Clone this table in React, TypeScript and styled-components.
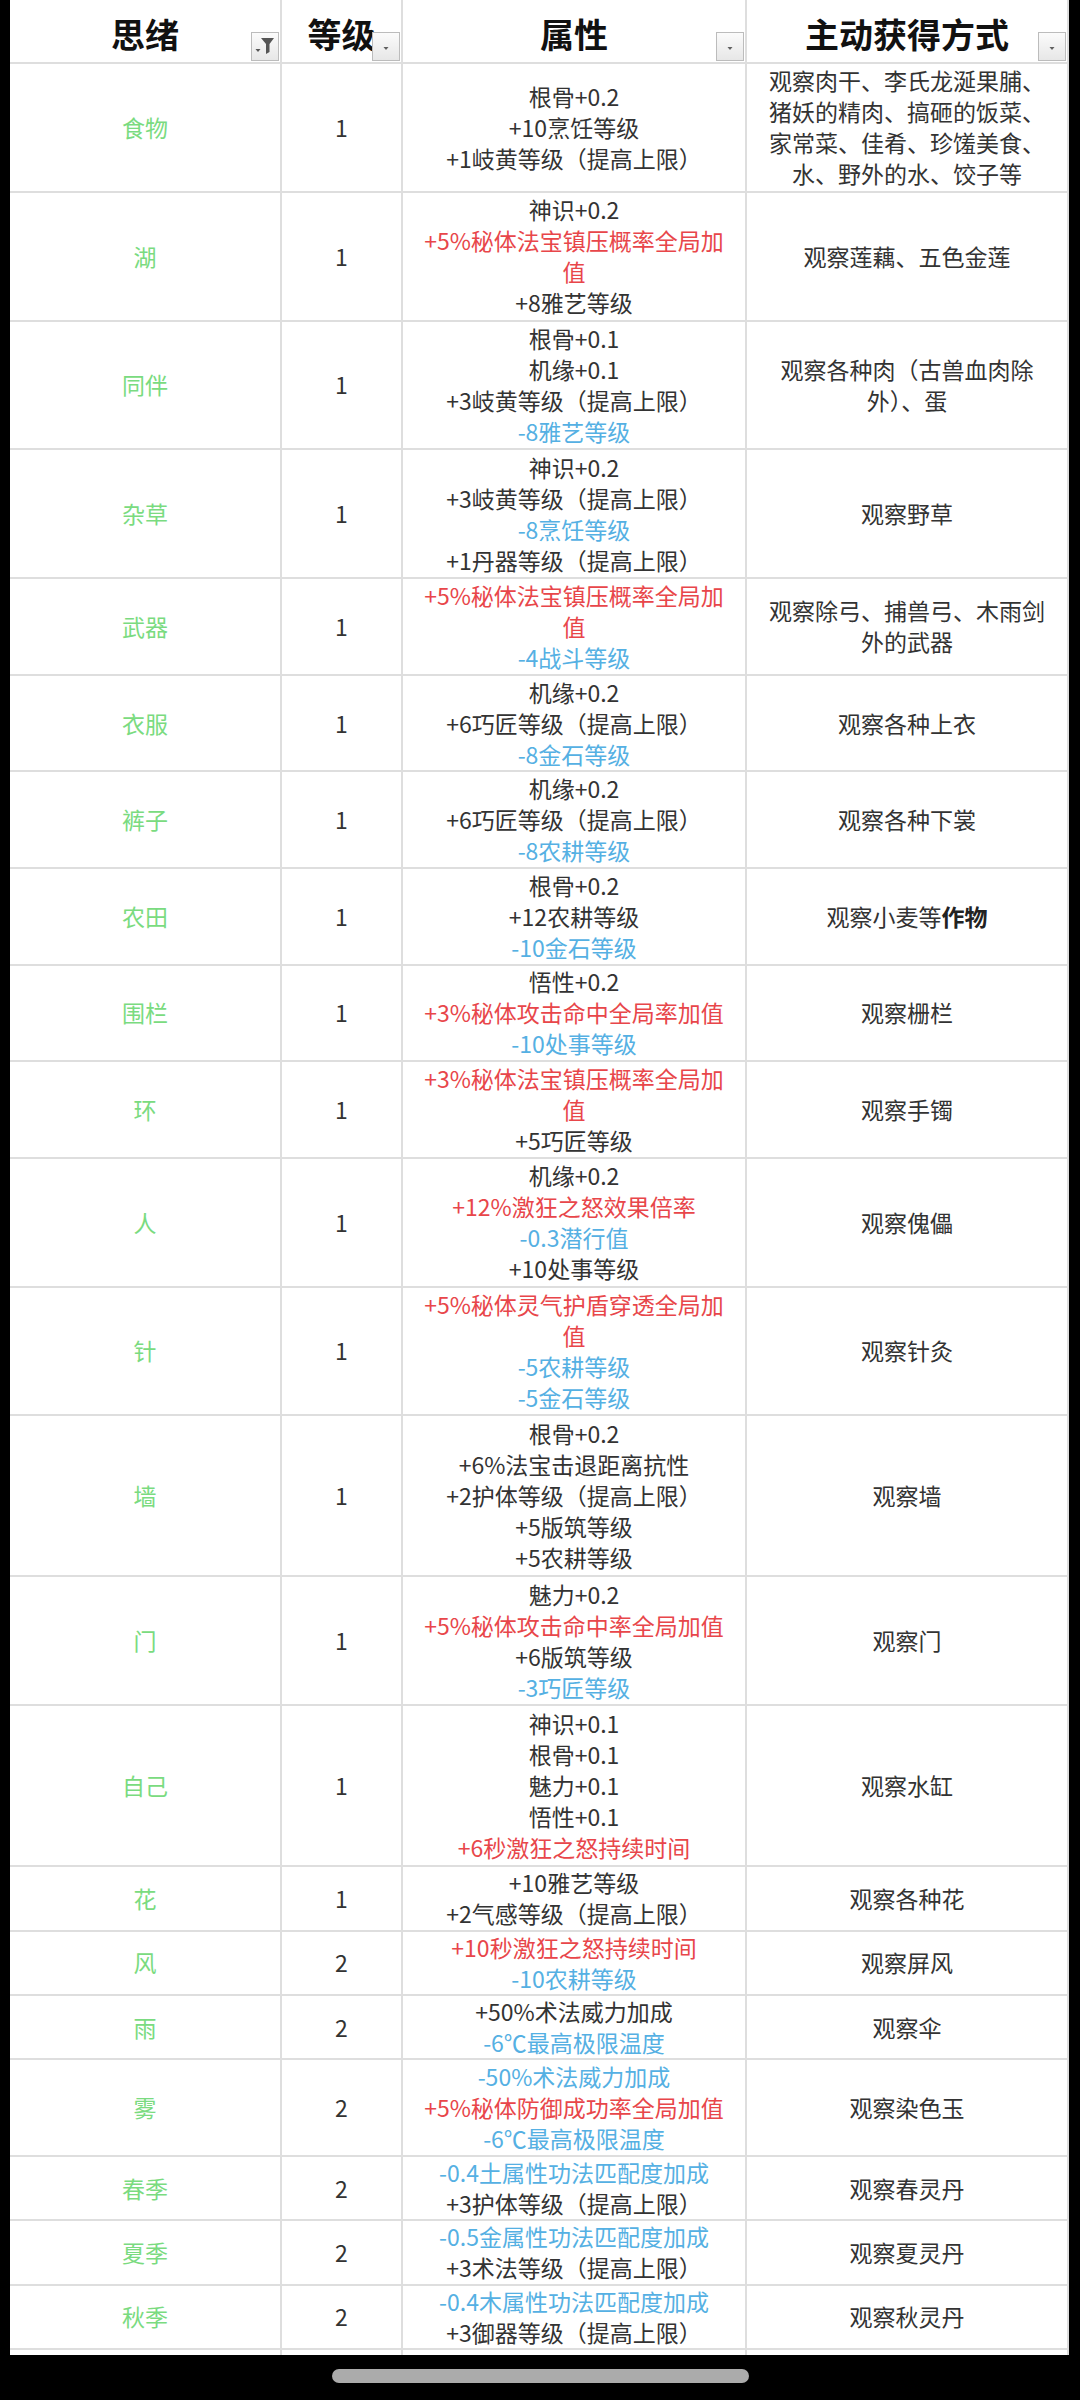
import React from 'react'
import styled, { createGlobalStyle } from 'styled-components'

const GlobalStyle = createGlobalStyle`
  html, body {
    margin: 0;
    padding: 0;
    background: #000;
  }
  body {
    font-family: "Noto Sans CJK SC", "Noto Sans", sans-serif;
  }
`

type Tone = 'k' | 'r' | 'b'
type AttrLine = { tone: Tone; text: string }

const k = (text: string): AttrLine => ({ tone: 'k', text })
const r = (text: string): AttrLine => ({ tone: 'r', text })
const b = (text: string): AttrLine => ({ tone: 'b', text })

type RowData = {
  name: string
  level: number
  lines: number
  attrs: AttrLine[]
  source: React.ReactNode[]
}

const rows: RowData[] = [
  {
    name: '食物',
    level: 1,
    lines: 4,
    attrs: [k('根骨+0.2'), k('+10烹饪等级'), k('+1岐黄等级（提高上限）')],
    source: ['观察肉干、李氏龙涎果脯、', '猪妖的精肉、搞砸的饭菜、', '家常菜、佳肴、珍馐美食、', '水、野外的水、饺子等']
  },
  {
    name: '湖',
    level: 1,
    lines: 4,
    attrs: [k('神识+0.2'), r('+5%秘体法宝镇压概率全局加'), r('值'), k('+8雅艺等级')],
    source: ['观察莲藕、五色金莲']
  },
  {
    name: '同伴',
    level: 1,
    lines: 4,
    attrs: [k('根骨+0.1'), k('机缘+0.1'), k('+3岐黄等级（提高上限）'), b('-8雅艺等级')],
    source: ['观察各种肉（古兽血肉除', '外）、蛋']
  },
  {
    name: '杂草',
    level: 1,
    lines: 4,
    attrs: [k('神识+0.2'), k('+3岐黄等级（提高上限）'), b('-8烹饪等级'), k('+1丹器等级（提高上限）')],
    source: ['观察野草']
  },
  {
    name: '武器',
    level: 1,
    lines: 3,
    attrs: [r('+5%秘体法宝镇压概率全局加'), r('值'), b('-4战斗等级')],
    source: ['观察除弓、捕兽弓、木雨剑', '外的武器']
  },
  {
    name: '衣服',
    level: 1,
    lines: 3,
    attrs: [k('机缘+0.2'), k('+6巧匠等级（提高上限）'), b('-8金石等级')],
    source: ['观察各种上衣']
  },
  {
    name: '裤子',
    level: 1,
    lines: 3,
    attrs: [k('机缘+0.2'), k('+6巧匠等级（提高上限）'), b('-8农耕等级')],
    source: ['观察各种下裳']
  },
  {
    name: '农田',
    level: 1,
    lines: 3,
    attrs: [k('根骨+0.2'), k('+12农耕等级'), b('-10金石等级')],
    source: [
      <>
        观察小麦等<strong>作物</strong>
      </>
    ]
  },
  {
    name: '围栏',
    level: 1,
    lines: 3,
    attrs: [k('悟性+0.2'), r('+3%秘体攻击命中全局率加值'), b('-10处事等级')],
    source: ['观察栅栏']
  },
  {
    name: '环',
    level: 1,
    lines: 3,
    attrs: [r('+3%秘体法宝镇压概率全局加'), r('值'), k('+5巧匠等级')],
    source: ['观察手镯']
  },
  {
    name: '人',
    level: 1,
    lines: 4,
    attrs: [k('机缘+0.2'), r('+12%激狂之怒效果倍率'), b('-0.3潜行值'), k('+10处事等级')],
    source: ['观察傀儡']
  },
  {
    name: '针',
    level: 1,
    lines: 4,
    attrs: [r('+5%秘体灵气护盾穿透全局加'), r('值'), b('-5农耕等级'), b('-5金石等级')],
    source: ['观察针灸']
  },
  {
    name: '墙',
    level: 1,
    lines: 5,
    attrs: [
      k('根骨+0.2'),
      k('+6%法宝击退距离抗性'),
      k('+2护体等级（提高上限）'),
      k('+5版筑等级'),
      k('+5农耕等级')
    ],
    source: ['观察墙']
  },
  {
    name: '门',
    level: 1,
    lines: 4,
    attrs: [k('魅力+0.2'), r('+5%秘体攻击命中率全局加值'), k('+6版筑等级'), b('-3巧匠等级')],
    source: ['观察门']
  },
  {
    name: '自己',
    level: 1,
    lines: 5,
    attrs: [k('神识+0.1'), k('根骨+0.1'), k('魅力+0.1'), k('悟性+0.1'), r('+6秒激狂之怒持续时间')],
    source: ['观察水缸']
  },
  {
    name: '花',
    level: 1,
    lines: 2,
    attrs: [k('+10雅艺等级'), k('+2气感等级（提高上限）')],
    source: ['观察各种花']
  },
  {
    name: '风',
    level: 2,
    lines: 2,
    attrs: [r('+10秒激狂之怒持续时间'), b('-10农耕等级')],
    source: ['观察屏风']
  },
  {
    name: '雨',
    level: 2,
    lines: 2,
    attrs: [k('+50%术法威力加成'), b('-6℃最高极限温度')],
    source: ['观察伞']
  },
  {
    name: '雾',
    level: 2,
    lines: 3,
    attrs: [b('-50%术法威力加成'), r('+5%秘体防御成功率全局加值'), b('-6℃最高极限温度')],
    source: ['观察染色玉']
  },
  {
    name: '春季',
    level: 2,
    lines: 2,
    attrs: [b('-0.4土属性功法匹配度加成'), k('+3护体等级（提高上限）')],
    source: ['观察春灵丹']
  },
  {
    name: '夏季',
    level: 2,
    lines: 2,
    attrs: [b('-0.5金属性功法匹配度加成'), k('+3术法等级（提高上限）')],
    source: ['观察夏灵丹']
  },
  {
    name: '秋季',
    level: 2,
    lines: 2,
    attrs: [b('-0.4木属性功法匹配度加成'), k('+3御器等级（提高上限）')],
    source: ['观察秋灵丹']
  }
]

const COLUMNS = '272px 121px 344px 322px'
const LINE = '#dedede'

const toneColor: Record<Tone, string> = {
  k: '#333333',
  r: '#e8464a',
  b: '#55b0e3'
}

const Screen = styled.div`
  width: 1080px;
  height: 2400px;
  display: flex;
  flex-direction: column;
  background: #000;
  overflow: hidden;
`

const Sheet = styled.div`
  flex: 1;
  min-height: 0;
  margin: 0 11px 0 10px;
  background: #fff;
  overflow: hidden;
`

const HeaderRow = styled.div`
  display: grid;
  grid-template-columns: ${COLUMNS};
  height: 64px;
`

const HeaderCell = styled.div`
  position: relative;
  display: flex;
  align-items: center;
  justify-content: center;
  box-sizing: border-box;
  padding-top: 4px;
  border-right: 2px solid ${LINE};
  border-bottom: 2px solid ${LINE};
  font-size: 34px;
  font-weight: 700;
  color: #111;
`

const FilterButton = styled.div`
  position: absolute;
  right: 1px;
  bottom: 1px;
  width: 28px;
  height: 29px;
  box-sizing: border-box;
  border: 1px solid #bcbcbc;
  background: linear-gradient(#fbfbfb, #e7e7e7);
  display: flex;
  align-items: center;
  justify-content: center;

  svg {
    display: block;
  }
`

const Row = styled.div<{ $lines: number }>`
  display: grid;
  grid-template-columns: ${COLUMNS};
  height: ${({ $lines }) => $lines * 32.2}px;
`

const Cell = styled.div`
  display: flex;
  flex-direction: column;
  align-items: center;
  justify-content: center;
  box-sizing: border-box;
  border-right: 2px solid ${LINE};
  border-bottom: 2px solid ${LINE};
  font-size: 23px;
  line-height: 31px;
  color: #333;
  text-align: center;
`

const NameCell = styled(Cell)`
  color: #7adb80;
`

const TextLine = styled.div<{ $tone: Tone }>`
  white-space: nowrap;
  color: ${({ $tone }) => toneColor[$tone]};
`

const SourceLine = styled.div`
  white-space: nowrap;
  color: #333;

  strong {
    font-weight: 700;
    color: #222;
  }
`

const NavBar = styled.div`
  height: 45px;
  flex: none;
  display: flex;
  justify-content: center;
  padding-top: 14px;
  box-sizing: border-box;
`

const HomePill = styled.div`
  width: 417px;
  height: 14px;
  border-radius: 7px;
  background: #ababab;
`

// Partial next row that peeks out under the last full row
const PeekRow = styled.div`
  display: grid;
  grid-template-columns: ${COLUMNS};
  height: 12px;
`

const PeekCell = styled.div`
  box-sizing: border-box;
  border-right: 2px solid ${LINE};
`

const DropArrow = () => (
  <svg width="26" height="27" viewBox="0 0 26 27">
    <path d="M10.5 14 H15.5 L13 17 Z" fill="#606060" />
  </svg>
)

const FunnelIcon = () => (
  <svg width="26" height="27" viewBox="0 0 26 27">
    <path d="M9 5 H22 L17.5 11 V19 L14 21 V11 Z" fill="#555" />
    <path d="M3.5 16 H8.5 L6 19 Z" fill="#555" />
  </svg>
)

const headers = ['思绪', '等级', '属性', '主动获得方式']

export default function App() {
  return (
    <>
      <GlobalStyle />
      <Screen>
        <Sheet>
          <HeaderRow>
            {headers.map((title, index) => (
              <HeaderCell key={title}>
                {title}
                <FilterButton>{index === 0 ? <FunnelIcon /> : <DropArrow />}</FilterButton>
              </HeaderCell>
            ))}
          </HeaderRow>
          {rows.map((row) => (
            <Row key={row.name} $lines={row.lines}>
              <NameCell>{row.name}</NameCell>
              <Cell>{row.level}</Cell>
              <Cell>
                {row.attrs.map((line, index) => (
                  <TextLine key={index} $tone={line.tone}>
                    {line.text}
                  </TextLine>
                ))}
              </Cell>
              <Cell>
                {row.source.map((line, index) => (
                  <SourceLine key={index}>{line}</SourceLine>
                ))}
              </Cell>
            </Row>
          ))}
          <PeekRow>
            {headers.map((title) => (
              <PeekCell key={title} />
            ))}
          </PeekRow>
        </Sheet>
        <NavBar>
          <HomePill />
        </NavBar>
      </Screen>
    </>
  )
}
